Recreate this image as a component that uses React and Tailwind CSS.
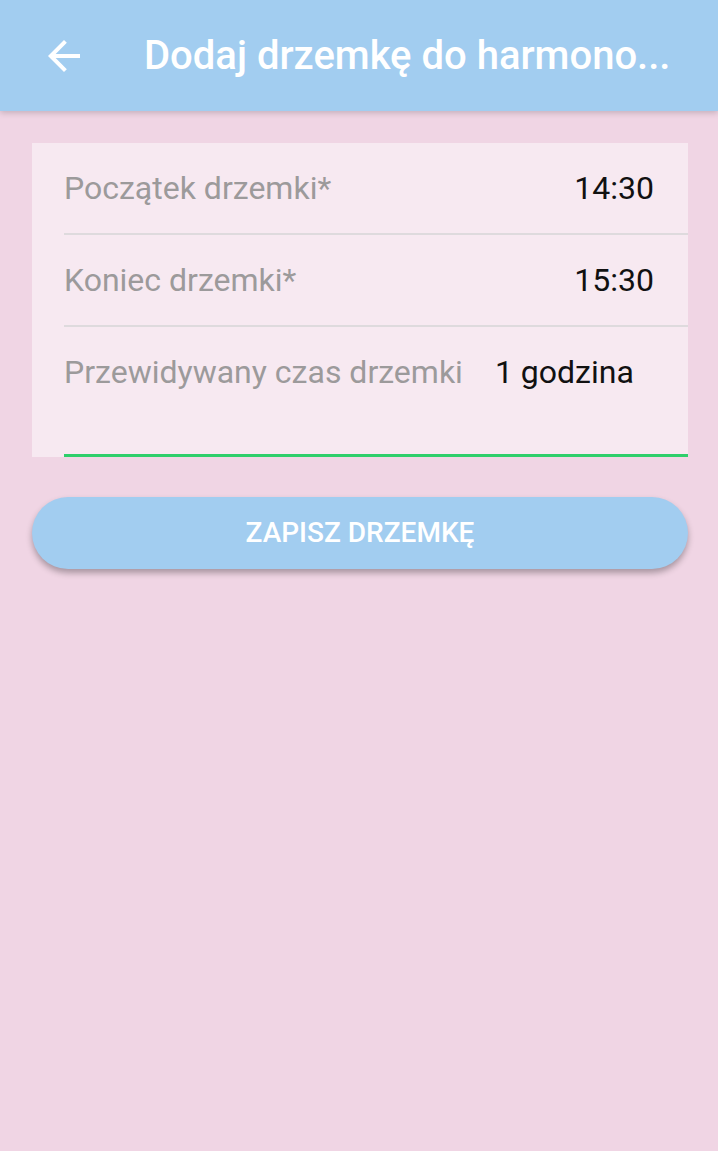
export default function App() {
    return (
        <div
            className="min-h-[1151px] w-full bg-[#f0d5e4] text-black"
            style={{ fontFamily: "Roboto, 'Noto Sans', sans-serif" }}
        >
            {/* App bar */}
            <header className="h-[111px] bg-[#a2cdf0] flex items-center shadow-[0_2px_6px_rgba(0,0,0,0.18)] relative">
                <div className="w-[112px] pl-[40px] flex">
                    <svg width="48" height="48" viewBox="0 0 24 24" fill="#ffffff">
                        <path d="M20 11H7.83l5.59-5.59L12 4l-8 8 8 8 1.41-1.41L7.83 13H20v-2z" />
                    </svg>
                </div>
                <h1 className="ml-[32px] text-[40px] font-medium text-white whitespace-nowrap">
                    Dodaj drzemkę do harmono...
                </h1>
            </header>

            <main className="pl-[32px] pr-[30px] pt-[32px]">
                {/* Form card */}
                <div className="bg-[#f7e9f1] pl-[32px]">
                    <div className="h-[92px] flex items-center justify-between pr-[34px] border-b-2 border-[#dedadd]">
                        <span className="text-[32px] leading-[32px] text-[#9c9a9b]">Początek drzemki*</span>
                        <span className="text-[32px] leading-[32px] text-[#111]">14:30</span>
                    </div>
                    <div className="h-[92px] flex items-center justify-between pr-[34px] border-b-2 border-[#dedadd]">
                        <span className="text-[32px] leading-[32px] text-[#9c9a9b]">Koniec drzemki*</span>
                        <span className="text-[32px] leading-[32px] text-[#111]">15:30</span>
                    </div>
                    <div className="h-[130px] flex items-start pt-[29px] gap-[32px] border-b-[3px] border-[#2ecf6b]">
                        <span className="text-[32px] leading-[32px] text-[#9c9a9b]">Przewidywany czas drzemki</span>
                        <span className="text-[32px] leading-[32px] text-[#111]">1 godzina</span>
                    </div>
                </div>

                {/* Save button */}
                <button className="mt-[40px] w-full h-[72px] rounded-full bg-[#a2cdf0] text-white text-[28px] font-medium shadow-[0_4px_6px_rgba(0,0,0,0.3)]">
                    ZAPISZ DRZEMKĘ
                </button>
            </main>
        </div>
    );
}
